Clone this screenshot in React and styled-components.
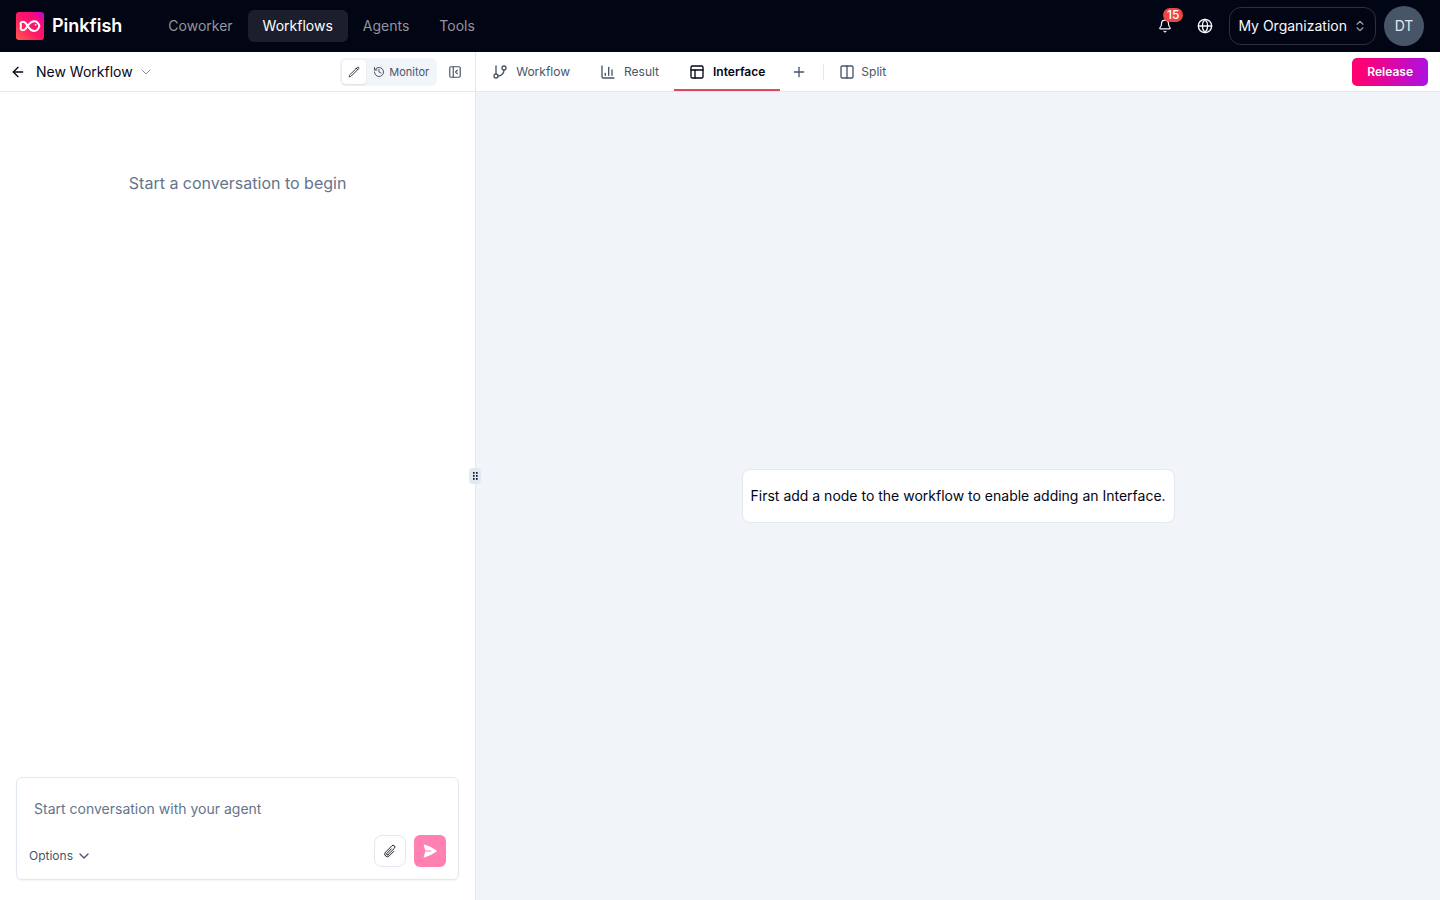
import React from 'react';
import styled, { createGlobalStyle } from 'styled-components';
import {
  ArrowLeft,
  Bell,
  ChartColumn,
  ChevronDown,
  ChevronsUpDown,
  Columns2,
  GitBranch,
  Globe,
  History,
  PanelLeftClose,
  PanelsTopLeft,
  Plus,
} from 'lucide-react';
import { HiOutlinePaperClip, HiOutlinePencil, HiPaperAirplane } from 'react-icons/hi2';

const GlobalStyle = createGlobalStyle`
  *, *::before, *::after { box-sizing: border-box; }
  body {
    margin: 0;
    color: #020617;
    background: #fff;
    font-family: Inter, "Liberation Sans", sans-serif;
    font-size: 14px;
    line-height: 20px;
  }
  button, textarea { font: inherit; color: inherit; }
  button { cursor: pointer; }
  svg { flex: none; display: block; }
`;

const Page = styled.div`
  display: flex;
  flex-direction: column;
  min-height: 100vh;
`;

const Header = styled.header`
  display: flex;
  align-items: center;
  justify-content: space-between;
  height: 52px;
  padding: 0 16px;
  background: #020514;
  color: #f8fafc;
`;

const HeaderGroup = styled.div`
  display: flex;
  align-items: center;
  gap: ${(p) => p.$gap || 0}px;
`;

const Brand = styled.a`
  display: flex;
  align-items: center;
  gap: 8px;
  color: #fff;
  font-size: 18px;
  line-height: 28px;
  font-weight: 600;
  text-decoration: none;
`;

const Nav = styled.nav`
  display: flex;
`;

const NavLink = styled.a`
  padding: 6px 15px;
  border-radius: 6px;
  color: ${(p) => (p.$active ? '#fff' : '#93959e')};
  background: ${(p) => (p.$active ? '#1b1e2b' : 'transparent')};
  text-decoration: none;
`;

const PlainButton = styled.button`
  display: flex;
  align-items: center;
  justify-content: center;
  width: ${(p) => p.$size || 32}px;
  height: ${(p) => p.$size || 32}px;
  padding: 0;
  border: 0;
  background: transparent;
`;

const BellButton = styled(PlainButton)`
  position: relative;
`;

const Badge = styled.span`
  position: absolute;
  top: -2px;
  right: -2px;
  padding: 0 4px;
  border-radius: 7px;
  background: #ef4444;
  color: #fff;
  font-size: 12px;
  line-height: 14px;
  font-weight: 500;
`;

const OrgButton = styled.button`
  display: flex;
  align-items: center;
  gap: 6px;
  height: 38px;
  padding: 0 8px;
  border: 1px solid #2d303d;
  border-radius: 12px;
  background: transparent;
`;

const Avatar = styled.button`
  width: 40px;
  height: 40px;
  padding: 0;
  border: 0;
  border-radius: 50%;
  background: #475569;
  color: #e2e8f0;
`;

const Body = styled.div`
  display: flex;
  flex: 1;
`;

const ChatPane = styled.section`
  display: flex;
  flex-direction: column;
  flex: 0 0 33%;
  min-width: 0;
`;

const WorkPane = styled.main`
  position: relative;
  display: flex;
  flex-direction: column;
  flex: 1;
  min-width: 0;
  border-left: 1px solid #e2e8f0;
`;

const Bar = styled.div`
  display: flex;
  align-items: center;
  justify-content: space-between;
  height: 40px;
  padding: 0 ${(p) => p.$right}px 0 ${(p) => p.$left}px;
  border-bottom: 1px solid #e2e8f0;
  background: #fff;
`;

const Title = styled.h1`
  margin: 0 6px 0 10px;
  font-size: 14px;
  line-height: 20px;
  font-weight: 400;
`;

const ModeSwitch = styled.div`
  display: flex;
  gap: 1px;
  padding: 2px;
  border-radius: 6px;
  background: #f1f5f9;
`;

const ModeButton = styled.button`
  display: flex;
  align-items: center;
  gap: 4px;
  height: 24px;
  padding: 0 6px;
  border: 0;
  border-radius: 4px;
  background: ${(p) => (p.$active ? '#fff' : 'transparent')};
  box-shadow: ${(p) => (p.$active ? '0 1px 2px rgba(15, 23, 42, 0.1)' : 'none')};
  color: ${(p) => (p.$active ? '#020617' : '#475569')};
  font-size: 11px;
  line-height: 16px;
`;

const EmptyChat = styled.p`
  flex: 1;
  margin: 0;
  padding: 79px 16px 0;
  color: #64748b;
  font-size: 16px;
  line-height: 24px;
  text-align: center;
`;

const Composer = styled.form`
  display: flex;
  flex-direction: column;
  margin: 0 16px 20px;
  padding: 12px;
  border: 1px solid #e2e8f0;
  border-radius: 6px;
  box-shadow: 0 1px 2px rgba(15, 23, 42, 0.05);
`;

const Message = styled.textarea`
  display: block;
  width: 100%;
  height: 45px;
  padding: 9px 5px;
  border: 0;
  outline: 0;
  resize: none;
  background: transparent;
  line-height: 20px;
  &::placeholder { color: #64748b; opacity: 1; }
`;

const ComposerFooter = styled.div`
  display: flex;
  align-items: center;
  justify-content: space-between;
`;

const OptionsButton = styled.button`
  display: flex;
  align-items: center;
  gap: 3px;
  margin-top: 10px;
  padding: 0;
  border: 0;
  background: transparent;
  color: #475569;
  font-size: 12px;
  line-height: 16px;
`;

const SquareButton = styled.button`
  display: flex;
  align-items: center;
  justify-content: center;
  width: 32px;
  height: 32px;
  padding: 0;
  border: ${(p) => (p.$primary ? '0' : '1px solid #e2e8f0')};
  border-radius: ${(p) => (p.$primary ? 6 : 8)}px;
  background: ${(p) => (p.$primary ? '#ff80b1' : '#fff')};
  color: ${(p) => (p.$primary ? '#fff' : '#020617')};
`;

const Tabs = styled.div`
  display: flex;
  align-items: center;
`;

const Tab = styled.button`
  display: flex;
  align-items: center;
  gap: ${(p) => (p.$tight ? 6 : 8)}px;
  height: 39px;
  padding: 2px 15px 0;
  border: 0;
  border-bottom: 2px solid ${(p) => (p.$active ? '#e04562' : 'transparent')};
  background: transparent;
  color: ${(p) => (p.$active ? '#020617' : '#475569')};
  font-size: 12px;
  line-height: 16px;
  font-weight: ${(p) => (p.$active ? 600 : 400)};
`;

const Divider = styled.span`
  width: 1px;
  height: 16px;
  margin-left: 5px;
  background: #e2e8f0;
`;

const Release = styled.button`
  height: 28px;
  padding: 0 15px;
  border: 0;
  border-radius: 5px;
  background: linear-gradient(100deg, #ff0070 10%, #b010e0 95%);
  color: #fff;
  font-size: 12px;
  line-height: 16px;
  font-weight: 600;
`;

const Canvas = styled.div`
  display: flex;
  flex: 1;
  align-items: center;
  justify-content: center;
  background: #f1f5f9;
`;

const Notice = styled.p`
  margin: 0;
  padding: 16px 8px;
  border: 1px solid #e2e8f0;
  border-radius: 8px;
  background: #fff;
`;

const Handle = styled.span`
  position: absolute;
  top: calc(50% - 8px);
  left: -7px;
  display: flex;
  align-items: center;
  justify-content: center;
  width: 12px;
  height: 16px;
  border-radius: 4px;
  background: #e2e8f0;
`;

function BrandMark() {
  return (
    <svg width="28" height="28" viewBox="0 0 28 28" aria-hidden="true">
      <defs>
        <linearGradient id="brand" x1="0" y1="1" x2="1" y2="0">
          <stop offset="0" stopColor="#ff5a4e" />
          <stop offset="0.45" stopColor="#ff1a66" />
          <stop offset="0.75" stopColor="#f80a78" />
          <stop offset="1" stopColor="#b50bd6" />
        </linearGradient>
      </defs>
      <rect width="28" height="28" rx="3" fill="url(#brand)" />
      <path
        d="M4.6 11.2C5.6 9.4 8 9.4 9.6 11.2L13 15.8C14.4 17.7 16 18.9 18.2 18.9C20.8 18.9 22.6 16.6 23.4 14C22.6 11.4 20.8 9.2 18.2 9.2C16 9.2 14.4 10.4 13 12.2L9.6 16.8C8 18.6 5.6 18.6 4.6 16.8C5 14.8 5 13.2 4.6 11.2Z"
        fill="none"
        stroke="#fff"
        strokeWidth="2"
        strokeLinejoin="round"
      />
      <circle cx="19.6" cy="12.8" r="0.9" fill="#fff" />
    </svg>
  );
}

function GripIcon() {
  return (
    <svg width="6" height="8" viewBox="0 0 6 8" fill="#0f172a" aria-hidden="true">
      {[0, 3, 6].map((y) => (
        <React.Fragment key={y}>
          <rect x="1" y={y} width="1.6" height="1.8" />
          <rect x="4" y={y} width="1.6" height="1.8" />
        </React.Fragment>
      ))}
    </svg>
  );
}

const sections = ['Coworker', 'Workflows', 'Agents', 'Tools'];

const views = [
  { label: 'Workflow', Icon: GitBranch },
  { label: 'Result', Icon: ChartColumn },
  { label: 'Interface', Icon: PanelsTopLeft },
];

export default function App() {
  return (
    <Page>
      <GlobalStyle />
      <Header>
        <HeaderGroup $gap={31}>
          <Brand href="#home">
            <BrandMark />
            Pinkfish
          </Brand>
          <Nav>
            {sections.map((name) => (
              <NavLink key={name} href={`#${name.toLowerCase()}`} $active={name === 'Workflows'}>
                {name}
              </NavLink>
            ))}
          </Nav>
        </HeaderGroup>
        <HeaderGroup $gap={8}>
          <BellButton aria-label="Notifications">
            <Bell size={14} strokeWidth={2} />
            <Badge>15</Badge>
          </BellButton>
          <PlainButton aria-label="Language">
            <Globe size={16} strokeWidth={2} />
          </PlainButton>
          <OrgButton>
            My Organization
            <ChevronsUpDown size={14} strokeWidth={2} color="#a5a7b0" />
          </OrgButton>
          <Avatar aria-label="Account">DT</Avatar>
        </HeaderGroup>
      </Header>
      <Body>
        <ChatPane>
          <Bar $left={10} $right={12}>
            <HeaderGroup>
              <PlainButton $size={16} aria-label="Back">
                <ArrowLeft size={16} strokeWidth={2} />
              </PlainButton>
              <Title>New Workflow</Title>
              <PlainButton $size={14} aria-label="Workflow menu">
                <ChevronDown size={16} strokeWidth={1} color="#475569" />
              </PlainButton>
            </HeaderGroup>
            <HeaderGroup $gap={10}>
              <ModeSwitch>
                <ModeButton $active aria-label="Edit">
                  <HiOutlinePencil size={12} />
                </ModeButton>
                <ModeButton>
                  <History size={12} strokeWidth={2} />
                  Monitor
                </ModeButton>
              </ModeSwitch>
              <PlainButton $size={16} aria-label="Collapse panel">
                <PanelLeftClose size={14} strokeWidth={2} color="#475569" />
              </PlainButton>
            </HeaderGroup>
          </Bar>
          <EmptyChat>Start a conversation to begin</EmptyChat>
          <Composer onSubmit={(e) => e.preventDefault()}>
            <Message aria-label="Message" placeholder="Start conversation with your agent" />
            <ComposerFooter>
              <OptionsButton type="button">
                Options
                <ChevronDown size={16} strokeWidth={2} />
              </OptionsButton>
              <HeaderGroup $gap={8}>
                <SquareButton type="button" aria-label="Attach file">
                  <HiOutlinePaperClip size={14} />
                </SquareButton>
                <SquareButton $primary aria-label="Send">
                  <HiPaperAirplane size={16} />
                </SquareButton>
              </HeaderGroup>
            </ComposerFooter>
          </Composer>
        </ChatPane>
        <WorkPane>
          <Bar $left={1} $right={12}>
            <Tabs>
              {views.map(({ label, Icon }) => (
                <Tab key={label} $active={label === 'Interface'}>
                  <Icon size={16} strokeWidth={2} />
                  {label}
                </Tab>
              ))}
              <PlainButton $size={38} aria-label="Add view">
                <Plus size={16} strokeWidth={2} color="#475569" />
              </PlainButton>
              <Divider />
              <Tab $tight>
                <Columns2 size={16} strokeWidth={2} />
                Split
              </Tab>
            </Tabs>
            <Release>Release</Release>
          </Bar>
          <Canvas>
            <Notice>First add a node to the workflow to enable adding an Interface.</Notice>
          </Canvas>
          <Handle>
            <GripIcon />
          </Handle>
        </WorkPane>
      </Body>
    </Page>
  );
}
